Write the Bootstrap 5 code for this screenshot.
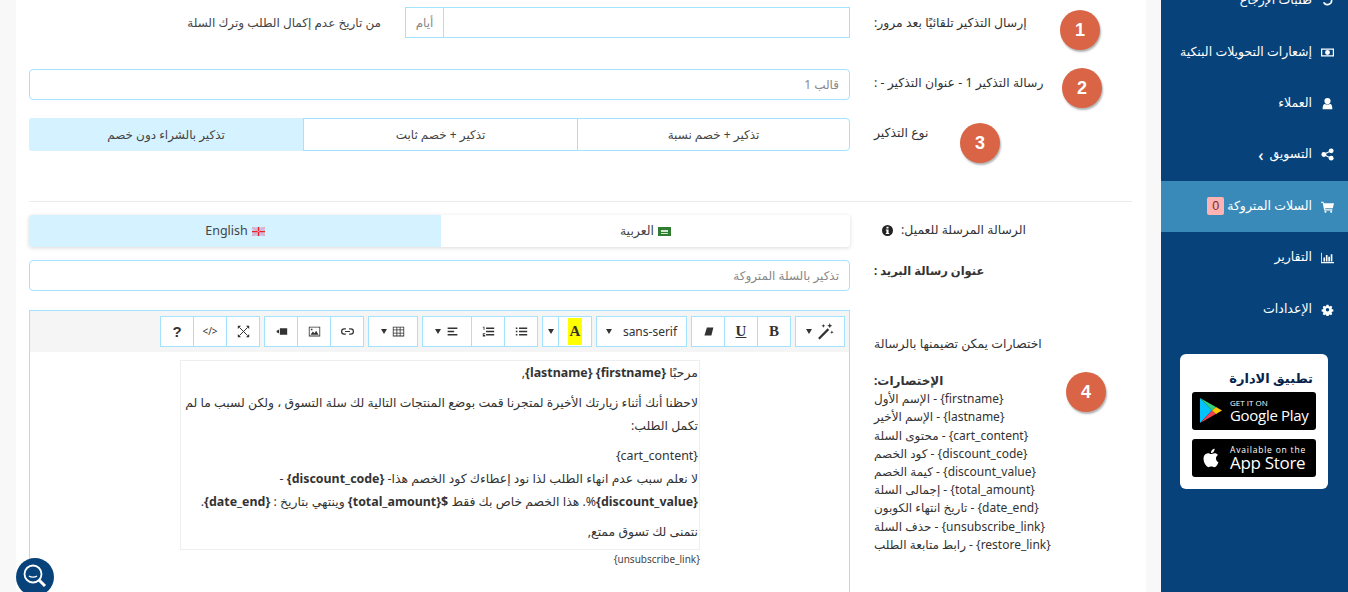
<!DOCTYPE html>
<html lang="ar" dir="rtl">
<head>
<meta charset="UTF-8">
<meta name="viewport" content="width=device-width, initial-scale=1.0">
<title>السلات المتروكة</title>
<link href="https://cdn.jsdelivr.net/npm/bootstrap@5.3.0/dist/css/bootstrap.min.css" rel="stylesheet">
<style>
html, body { height: 100%; overflow: hidden; }
body { background: #f8f8f8; font-family: "Noto Sans", "DejaVu Sans", sans-serif; font-size: 12px; color: #444; }
.page-wrap { height: 592px; overflow: hidden; }

/* sidebar */
.side-bar { width: 187px; background: #07437a; flex-shrink: 0; margin-left: 15px; height: 592px; overflow: hidden; }
.side-list { margin-top: -25px; }
.side-item { height: 51.4px; color: #fff; font-weight: 500; padding-right: 14px; font-size: 12.500px; gap: 9px; text-decoration: none; }
.side-item svg { width: 13px; height: 13px; fill: #fff; flex-shrink: 0; }
.side-on { background: #3a8ab9; }
.side-chev { font-size: 16px; line-height: 16px; margin-right: -3px; }
.cart-count { background: #ffb3b3; color: #7a2a2a; font-weight: 400; border-radius: 2px; padding: 0 5px; line-height: 18px; margin-right: -6px; font-family: "Liberation Sans", sans-serif; }
.app-box { width: 148px; height: 135px; margin: 19px 20px 0 0; background: #fff; border-radius: 6px; padding: 16px 12px 0; }
.app-title { color: #07234a; font-weight: 700; font-size: 13px; line-height: 17px; padding-right: 3px; margin-bottom: 5px; text-align: right; }
.store-btn { direction: ltr; background: #000; border-radius: 3px; height: 38px; width: 124px; color: #fff; margin-bottom: 9px; font-family: "Open Sans", sans-serif; }
.store-small { font-size: 8px; line-height: 9px; }
.store-big { font-size: 15px; line-height: 17px; letter-spacing: -.3px; }
.store-avail { font-size: 8.500px; letter-spacing: .8px; }
.store-app { font-size: 17px; }

/* main panel */
.main-panel { width: 1130px; height: 592px; background: #fff; padding: 7px 14px 0 13px; flex-shrink: 0; }
.lbl-col { width: 282px; flex-shrink: 0; position: relative; color: #333; }
.lbl-txt { position: absolute; left: 24px; white-space: nowrap; font-size: 12.400px; }
.lbl-bold { font-size: 11.500px; }
.ctl-col { width: 821px; flex-shrink: 0; }
.fld { border: 1px solid #a4e3fd; border-radius: 4px; height: 31px; font-size: 12px; padding: 0 10px; box-shadow: none; color: #666; transition: none; }
.fld::placeholder { color: #888; }
.days-group { width: 445px; }
.days-group .form-control { border-radius: 0 4px 4px 0; border-color: #a4e3fd; height: 31px; transition: none; }
.days-group .input-group-text { border-radius: 4px 0 0 4px; border-color: #a4e3fd; background: #fff; color: #888; font-size: 12px; width: 39px; justify-content: center; padding: 0; margin-right: -1px; margin-left: 0 !important; }
.after-days { margin-right: 24px; color: #444; }
.type-group { height: 33px; border: 1px solid #a4e3fd; border-radius: 4px; }
.type-btn { flex: 0 0 274px; border-left: 1px solid #a4e3fd; color: #444; }
.type-btn:first-child { flex-basis: 272px; }
.type-on { flex: 1 1 0; border-left: 0; background: #d4f2ff; margin: -1px 0 -1px -1px; border-radius: 3px 0 0 3px; }
.sep-line { border-top: 1px solid #ececec; margin: 50px 0 13px; width: 1103px; }
.lang-tabs { height: 32px; box-shadow: 0 1px 4px rgba(0,0,0,.15); border-radius: 3px; overflow: hidden; }
.lang-tab { flex: 0 0 409px; gap: 4px; color: #444; font-size: 12.500px; }
.lang-on { flex: 1 1 0; background: #d4f2ff; }

/* editor */
.editor-box { border: 1px solid #a4e3fd; border-bottom: 0; height: 300px; }
.ed-bar { background: #f5f5f5; height: 41px; padding: 5px 4px 0 0; gap: 5px; }
.ed-grp { display: flex; flex-shrink: 0; }
.ed-btn { height: 31px; width: 34px; flex-shrink: 0; border: 1px solid #a4e3fd; background: #fff; border-radius: 0; padding: 0; display: flex; align-items: center; justify-content: center; gap: 5px; color: #333; font-size: 12px; margin-left: -1px; direction: ltr; }
.ed-btn svg { width: 13px; height: 13px; fill: #333; }
.ed-wide { width: 50px; }
.ed-font { width: 91px; gap: 11px; }
.ed-caret { width: 17px; }
.ed-code { font-size: 10px; }
.ed-help { font: 700 15px "Liberation Sans", sans-serif; }
.ed-wand { width: 17px !important; height: 17px !important; }
.tri { display: inline-block; width: 0; height: 0; border-left: 3.500px solid transparent; border-right: 3.500px solid transparent; border-top: 5px solid #333; }
.srf { font-family: "Liberation Serif", serif; font-weight: 700; font-size: 15px; }
.hi-a { background: #ff0; padding: 6px 2px; line-height: 15px; }
.msg-box { width: 520px; margin: 8px 149px 0 0; }
.msg-inner { border: 1px solid #eee; padding: 0 1px 0 0; height: 190px; color: #333; font-size: 12.400px; line-height: 23px; }
.msg-inner p { margin: 0 0 7px; }
.unsub { font-size: 10px; text-align: right; margin-top: 1px; line-height: 16px; }
.codes { font-size: 12px; line-height: 18.200px; text-align: left; }

/* numbered markers */
.step-dot { position: absolute; width: 40px; height: 40px; border-radius: 50%; background: #d96546; color: #fff; font: 700 18px "Liberation Sans", sans-serif; box-shadow: 1px 2px 2px rgba(0,0,0,.3); }
.dot-1 { left: 210px; top: 3px; }
.dot-2 { left: 212px; top: -1px; }
.dot-3 { left: 110px; top: 5px; }
.dot-4 { left: 216px; top: 62px; }
.pos-t7 { top: 7px; } .pos-t5 { top: 5px; } .pos-t6 { top: 6px; } .pos-t2 { top: 2px; }
.pos-hint { top: 25px; }
.pos-codes { top: 62px; }
.pos-info { top: 6px; left: 32px; }
.row-gap-31 { margin-top: 31px; } .row-gap-18 { margin-top: 18px; } .row-gap-13 { margin-top: 13px; } .row-gap-19 { margin-top: 19px; }
.find-btn { position: fixed; left: 16px; top: 558px; width: 38px; height: 38px; border-radius: 50%; background: #07437a; }
</style>
</head>
<body>
<div class="page-wrap d-flex">

  <aside class="side-bar">
    <nav class="side-list d-flex flex-column">
      <a class="side-item d-flex align-items-center" href="#">
        <svg viewBox="0 0 16 16"><path d="M8 2a6 6 0 1 1-5.600 8h2.200A4 4 0 1 0 8 4v2.500L3.500 3.200 8 0z"/></svg>طلبات الإرجاع</a>
      <a class="side-item d-flex align-items-center" href="#">
        <svg viewBox="0 0 16 16"><path fill-rule="evenodd" d="M0 3h16v10H0zM1.500 4.500v7h13v-7zM8 5a3 3 0 1 1 0 6 3 3 0 0 1 0-6z"/></svg>إشعارات التحويلات البنكية</a>
      <a class="side-item d-flex align-items-center" href="#">
        <svg viewBox="0 0 16 16"><circle cx="8" cy="5" r="3.800"/><path d="M2 15c0-5 1.500-6.500 3-6.500 1 1 4.500 1 6 0 1.500 0 3 1.500 3 6.500z"/></svg>العملاء</a>
      <a class="side-item d-flex align-items-center" href="#">
        <svg viewBox="0 0 16 16"><circle cx="3.500" cy="8" r="3"/><circle cx="12.500" cy="3.500" r="3"/><circle cx="12.500" cy="12.500" r="3"/><path d="M3 7.300l9-4.500.6 1.300-9 4.500zM3.600 7.400l9 4.500-.6 1.300-9-4.500z"/></svg>التسويق<span class="side-chev">&#8250;</span></a>
      <a class="side-item side-on d-flex align-items-center" href="#">
        <svg viewBox="0 0 16 16"><path d="M0 2h3l.5 2H16l-1.500 6H5l.3 1.500H14V13H4L2 3.500H0z"/><circle cx="5.500" cy="14.500" r="1.300"/><circle cx="12.500" cy="14.500" r="1.300"/></svg>السلات المتروكة<span class="cart-count">0</span></a>
      <a class="side-item d-flex align-items-center" href="#">
        <svg viewBox="0 0 16 16"><path d="M0 2h1v11.500h15V15H0zM3 8h2v5H3zM6 5h2v8H6zM9 7h2v6H9zM12 4h2v9h-2z"/></svg>التقارير</a>
      <a class="side-item d-flex align-items-center" href="#">
        <svg viewBox="0 0 16 16"><path fill-rule="evenodd" d="M6.500 1h3l.4 2 1.400.6 1.700-1.100 2 2-1.100 1.700.6 1.400 2 .4v3l-2 .4-.6 1.400 1.100 1.700-2 2-1.700-1.100-1.400.6-.4 2h-3l-.4-2-1.400-.6-1.700 1.100-2-2 1.100-1.700-.6-1.400-2-.4v-3l2-.4.6-1.400-1.100-1.700 2-2 1.700 1.100 1.400-.6zM8 5.800a2.500 2.500 0 1 0 0 5 2.500 2.500 0 0 0 0-5z" transform="translate(1.200 1.200) scale(.85)"/></svg>الإعدادات</a>
    </nav>
    <div class="app-box">
      <div class="app-title">تطبيق الادارة</div>
      <div class="store-btn d-flex align-items-center">
        <svg class="mx-2" width="22" height="25" viewBox="0 0 22 25"><path fill="#00c3ff" d="M0 0v25l12-12.500z"/><path fill="#35d07f" d="M0 0l16 9-4 3.500z"/><path fill="#f0424f" d="M0 25l16-9-4-3.500z"/><path fill="#ffc800" d="M16 9l6 3.500-6 3.500-4-3.500z"/></svg>
        <div><div class="store-small">GET IT ON</div><div class="store-big">Google Play</div></div>
      </div>
      <div class="store-btn d-flex align-items-center">
        <svg class="mx-2" width="22" height="24" viewBox="0 0 24 24"><path fill="#fff" d="M18.710 19.500c-.83 1.240-1.710 2.450-3.050 2.470-1.340.03-1.770-.79-3.290-.79-1.530 0-2 .77-3.270.82-1.310.05-2.300-1.320-3.140-2.530C4.250 17 2.940 12.450 4.700 9.390c.87-1.520 2.430-2.480 4.120-2.510 1.280-.02 2.500.87 3.290.87.78 0 2.260-1.070 3.810-.91.65.03 2.470.26 3.640 1.980-.09.06-2.170 1.280-2.150 3.810.03 3.020 2.650 4.030 2.680 4.040-.03.07-.42 1.440-1.380 2.830M13 3.500c.73-.83 1.940-1.460 2.940-1.500.13 1.170-.34 2.350-1.040 3.190-.69.85-1.830 1.510-2.950 1.420-.15-1.150.41-2.350 1.050-3.110z"/></svg>
        <div><div class="store-small store-avail">Available on the</div><div class="store-big store-app">App Store</div></div>
      </div>
    </div>
  </aside>

  <main class="main-panel">
    <!-- row 1 -->
    <div class="d-flex">
      <div class="lbl-col">
        <span class="lbl-txt pos-t7">إرسال التذكير تلقائيًا بعد مرور:</span>
        <span class="step-dot dot-1 d-flex align-items-center justify-content-center">1</span>
      </div>
      <div class="ctl-col d-flex align-items-center">
        <div class="input-group days-group">
          <input type="text" class="form-control">
          <span class="input-group-text">أيام</span>
        </div>
        <span class="after-days">من تاريخ عدم إكمال الطلب وترك السلة</span>
      </div>
    </div>
    <!-- row 2 -->
    <div class="d-flex row-gap-31">
      <div class="lbl-col">
        <span class="lbl-txt pos-t5">رسالة التذكير 1 - عنوان التذكير - :</span>
        <span class="step-dot dot-2 d-flex align-items-center justify-content-center">2</span>
      </div>
      <div class="ctl-col"><input type="text" class="form-control fld" placeholder="قالب 1"></div>
    </div>
    <!-- row 3 -->
    <div class="d-flex row-gap-18">
      <div class="lbl-col">
        <span class="lbl-txt pos-t6">نوع التذكير</span>
        <span class="step-dot dot-3 d-flex align-items-center justify-content-center">3</span>
      </div>
      <div class="ctl-col d-flex type-group">
        <div class="type-btn d-flex align-items-center justify-content-center">تذكير + خصم نسبة</div>
        <div class="type-btn d-flex align-items-center justify-content-center">تذكير + خصم ثابت</div>
        <div class="type-btn type-on d-flex align-items-center justify-content-center">تذكير بالشراء دون خصم</div>
      </div>
    </div>
    <div class="sep-line"></div>
    <!-- language tabs -->
    <div class="d-flex">
      <div class="lbl-col">
        <span class="lbl-txt pos-info d-flex align-items-center gap-2">الرسالة المرسلة للعميل:
          <svg width="11" height="11" viewBox="0 0 16 16"><path fill="#222" fill-rule="evenodd" d="M8 0a8 8 0 1 1 0 16A8 8 0 0 1 8 0zM6.500 2.500v2.500h3V2.500zM5.500 6.500V8h1v3.500h-1V13h5v-1.500h-1v-5z"/></svg>
        </span>
      </div>
      <div class="ctl-col d-flex lang-tabs">
        <div class="lang-tab d-flex align-items-center justify-content-center">
          <svg width="13" height="9" viewBox="0 0 13 9"><rect width="13" height="9" fill="#2e7d32"/><rect x="3" y="3" width="7" height="2" fill="#cfe8cf"/><rect x="3" y="6" width="7" height="1" fill="#cfe8cf"/></svg>العربية</div>
        <div class="lang-tab lang-on d-flex align-items-center justify-content-center">
          <svg width="13" height="9" viewBox="0 0 13 9"><rect width="13" height="9" fill="#c9c6e8"/><path d="M0 4h13v1.200H0zM5.800 0H7.200v9H5.800z" fill="#e8202a"/><path d="M0 0l13 9M13 0L0 9" stroke="#ef9aa5" stroke-width="1"/></svg>English</div>
      </div>
    </div>
    <!-- subject -->
    <div class="d-flex row-gap-13">
      <div class="lbl-col"><strong class="lbl-txt lbl-bold pos-t2">عنوان رسالة البريد :</strong></div>
      <div class="ctl-col"><input type="text" class="form-control fld" placeholder="تذكير بالسلة المتروكة"></div>
    </div>
    <!-- editor -->
    <div class="d-flex row-gap-19">
      <div class="lbl-col">
        <span class="lbl-txt pos-hint">اختصارات يمكن تضيمنها بالرسالة</span>
        <div class="lbl-txt codes pos-codes">
          <strong>الإختصارات:</strong><br>
          {firstname} - الإسم الأول<br>
          {lastname} - الإسم الأخير<br>
          {cart_content} - محتوى السلة<br>
          {discount_code} - كود الخصم<br>
          {discount_value} - كيمة الخصم<br>
          {total_amount} - إجمالى السلة<br>
          {date_end} - تاريخ انتهاء الكوبون<br>
          {unsubscribe_link} - حذف السلة<br>
          {restore_link} - رابط متابعة الطلب
        </div>
        <span class="step-dot dot-4 d-flex align-items-center justify-content-center">4</span>
      </div>
      <div class="ctl-col editor-box">
        <div class="ed-bar d-flex">
          <div class="ed-grp"><button class="ed-btn ed-wide btn"><span class="tri"></span>
            <svg class="ed-wand" viewBox="0 0 16 16"><path d="M1 14L10 5l1.500 1.500-9 9zM12 0l.7 1.800 1.800.7-1.800.7L12 5l-.7-1.800-1.800-.7 1.800-.7zM14 7l.5 1.200 1.200.5-1.200.5-.5 1.200-.5-1.200-1.200-.5 1.200-.5zM6 1l.5 1.200 1.200.5-1.200.5L6 4.400l-.5-1.200-1.200-.5 1.200-.5z"/></svg></button></div>
          <div class="ed-grp">
            <button class="ed-btn btn srf">B</button>
            <button class="ed-btn btn srf text-decoration-underline">U</button>
            <button class="ed-btn btn"><svg viewBox="0 0 16 16"><path d="M6 3h8l-2.500 10H3z"/></svg></button>
          </div>
          <div class="ed-grp"><button class="ed-btn ed-font btn"><span class="tri"></span>sans-serif</button></div>
          <div class="ed-grp">
            <button class="ed-btn btn"><span class="srf hi-a">A</span></button>
            <button class="ed-btn ed-caret btn"><span class="tri"></span></button>
          </div>
          <div class="ed-grp">
            <button class="ed-btn btn"><svg viewBox="0 0 16 16"><path d="M1 3h2v2H1zM1 7h2v2H1zM1 11h2v2H1zM5 3h10v2H5zM5 7h10v2H5zM5 11h10v2H5z"/></svg></button>
            <button class="ed-btn btn"><svg viewBox="0 0 16 16"><path d="M5 3h10v2H5zM5 7h10v2H5zM5 11h10v2H5zM1 2h2v4H2V3H1zM1 10h3v1H2v1h2v2H1z"/></svg></button>
            <button class="ed-btn ed-wide btn"><span class="tri"></span><svg viewBox="0 0 16 16"><path d="M2 3h12v2H2zM2 7h8v2H2zM2 11h12v2H2z"/></svg></button>
          </div>
          <div class="ed-grp"><button class="ed-btn ed-wide btn"><span class="tri"></span><svg viewBox="0 0 16 16"><path fill-rule="evenodd" d="M1 2h14v12H1zM2 3v2.500h3.500V3zM6.500 3v2.500h3V3zM10.500 3v2.500H14V3zM2 6.500v3h3.500v-3zM6.500 6.500v3h3v-3zM10.500 6.500v3H14v-3zM2 10.500V13h3.500v-2.500zM6.500 10.500V13h3v-2.500zM10.500 10.500V13H14v-2.500z"/></svg></button></div>
          <div class="ed-grp">
            <button class="ed-btn btn"><svg viewBox="0 0 16 16"><path d="M6 4H4a4 4 0 0 0 0 8h2v-1.500H4a2.500 2.500 0 0 1 0-5h2zM10 4h2a4 4 0 0 1 0 8h-2v-1.500h2a2.500 2.500 0 0 0 0-5h-2zM5 7.300h6v1.400H5z"/></svg></button>
            <button class="ed-btn btn"><svg viewBox="0 0 16 16"><path fill-rule="evenodd" d="M1 2h14v12H1zM2 3v10h12V3zM3 12l3-4 2 2 2-3 3 5zM3.500 4.500h2v2h-2z"/></svg></button>
            <button class="ed-btn btn"><svg viewBox="0 0 16 16"><path d="M6 4h9v8H6zM2 7l3-1.500v5L2 9z"/></svg></button>
          </div>
          <div class="ed-grp">
            <button class="ed-btn btn"><svg viewBox="0 0 16 16"><path d="M3 3l10 10M13 3L3 13" stroke="#333" stroke-width="1.200" fill="none"/><path d="M1 1h4L1 5zM15 1v4l-4-4zM1 15v-4l4 4zM15 15h-4l4-4z"/></svg></button>
            <button class="ed-btn ed-code btn">&lt;/&gt;</button>
            <button class="ed-btn ed-help btn">?</button>
          </div>
        </div>
        <div class="msg-box">
          <div class="msg-inner">
            <p>مرحبًا <b>{firstname}</b> <b>{lastname}</b>,</p>
            <p>لاحظنا أنك أثناء زيارتك الأخيرة لمتجرنا قمت بوضع المنتجات التالية لك سلة التسوق ، ولكن لسبب ما لم تكمل الطلب:</p>
            <p class="mb-0">{cart_content}</p>
            <p>لا نعلم سبب عدم انهاء الطلب لذا نود إعطاءك كود الخصم هذا- <b>{discount_code}</b> - <b>{discount_value}</b>%. هذا الخصم خاص بك فقط <b>${total_amount}</b> وينتهي بتاريخ : <b>{date_end}</b>.</p>
            <p>نتمنى لك تسوق ممتع,</p>
          </div>
          <div class="unsub">{unsubscribe_link}</div>
        </div>
      </div>
    </div>
  </main>
</div>

<button class="find-btn btn p-0 border-0" aria-label="بحث">
  <svg width="38" height="38" viewBox="0 0 38 38"><circle cx="17" cy="16" r="8.500" fill="none" stroke="#fff" stroke-width="1.800"/><path d="M13 18c2 1.500 6 1.500 8 0" fill="none" stroke="#fff" stroke-width="1.300"/><path d="M23 22l6 6" stroke="#fff" stroke-width="3"/></svg>
</button>
<script src="https://cdn.jsdelivr.net/npm/bootstrap@5.3.0/dist/js/bootstrap.bundle.min.js"></script>
</body>
</html>
